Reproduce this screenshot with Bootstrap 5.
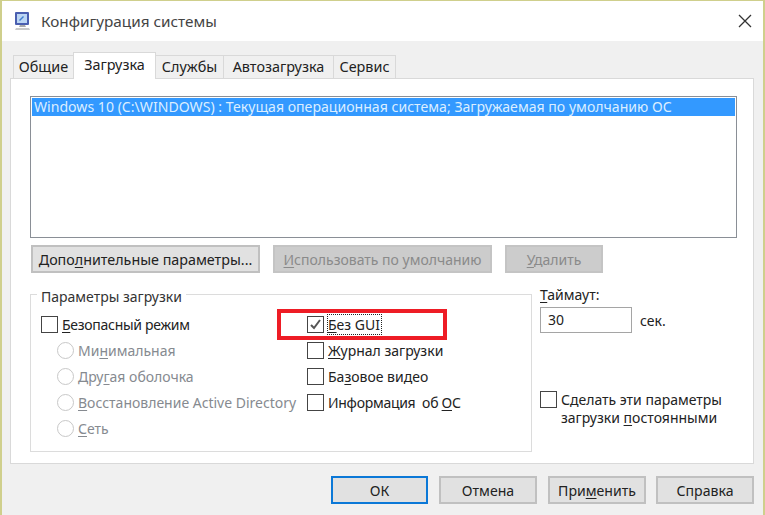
<!DOCTYPE html>
<html lang="ru">
<head>
<meta charset="utf-8">
<title>Конфигурация системы</title>
<link rel="stylesheet" href="https://cdn.jsdelivr.net/npm/bootstrap@5.3.0/dist/css/bootstrap.min.css">
<style>
html,body{width:765px;height:515px;margin:0;overflow:hidden;background:#f0f0f0}
body{font-family:"Noto Sans","Open Sans",sans-serif;font-size:14px;line-height:19px;color:#222}
.dlg{width:765px;height:515px;border-left:2px solid #cfcf8c;border-right:2px solid #cfcf8c;border-top:1px solid #cfcf8c;background:#f0f0f0;display:flex;flex-direction:column}
.ttl{height:40px;background:#fff;padding:0 11px 0 11px;gap:9px;font-size:15.3px;color:#444;flex:none}
.ttl svg{flex:none}
.x-btn{margin-left:auto}
.bodyw{padding:14px 9px 0 8px;flex:1}
.tabz{height:23px;padding-left:3px;align-items:flex-end}
.tabi{height:23px;border:1px solid #d9d9d9;border-bottom:0;background:#f0f0f0;margin-right:-1px;line-height:22px;color:#222;white-space:nowrap;text-align:center;font-size:14.4px;flex:none}
.tabi.act{height:27px;background:#fff;position:relative;z-index:2;margin-bottom:-1px;line-height:23px}
.t1{width:61px}.t2{width:83px}.t3{width:69px}.t4{width:111px}.t5{width:63px}
.pnl{height:386px;background:#fff;border:1px solid #d9d9d9;padding:17px 0 0 19px;display:flex;flex-direction:column}
.lst{height:142px;width:707px;border:1px solid #8a8f96;padding:1px;flex:none}
.lst-sel{height:18px;background:#3399ff;color:#dceeff;padding:0 2px;line-height:18px;font-size:14.1px;white-space:nowrap}
.btnz{gap:13px;margin-top:7px;height:28px;padding-left:1px}
.wbtn{height:28px;background:#e1e1e1;border:2px solid #c0c0c0;font-size:14.1px;line-height:23px;text-align:center;color:#222;padding:0;border-radius:0;white-space:nowrap}
.wbtn.off{background:#cccccc;border-color:#c4c4c4;color:#8a8a8a;font-size:14px}
.b1{width:229px;font-size:14.3px}.b2{width:219px}.b3{width:98px}
.low{margin-top:21px;height:160px;position:relative}
.grp{width:502px;height:158px;border:1px solid #dcdcdc;position:relative;padding:16px 0 0 10px;flex:none}
.grp-t{position:absolute;left:6px;top:-8px;background:#fff;padding:0 4px;line-height:19px;color:#333}
.c-a{width:266px;flex:none}
.rw{height:26px;display:flex;align-items:center;white-space:nowrap}
.tight{letter-spacing:-.28px}
.cb{width:17px;height:17px;border:1px solid #444;background:#fff;flex:none;margin-right:4px;display:flex;align-items:center;justify-content:center}
.rd{width:17px;height:17px;border:1px solid #c8c8c8;border-radius:50%;background:#fff;flex:none;margin-right:4px}
.ind{margin-left:16px;color:#868a90}
.u{text-decoration:underline;text-underline-offset:2px}
.foc{display:block;height:21px;border:1px dotted #222;margin-left:-1px;padding:0 1px 0 0;line-height:19px}
.red{position:absolute;left:246px;top:14px;width:170px;height:31px;border:4px solid #ee1c25;pointer-events:none;z-index:3}
.side{margin-left:8px;width:210px;margin-top:-9px}
.inp{width:92px;height:26px;border:1px solid #a5a5a5;padding:0 7px;line-height:24px;background:#fff}
.inrow{margin-top:3px}
.per{margin-top:58px}
.ctxt{line-height:18px}
.foot{justify-content:flex-end;gap:11px;padding:12px 0 0 0}
.foot .wbtn{width:98px;height:28px}
.foot .ok{border-color:#0b78d7;width:97px}
.foot .lastb{margin-left:-1px}
</style>
</head>
<body>
<div class="dlg">
 <div class="ttl d-flex align-items-center">
  <svg width="19" height="20" viewBox="0 0 19 20"><rect x="2" y="1" width="14" height="13" rx="1" fill="#4a5fb0"/><rect x="4" y="3" width="10" height="9" fill="#bcd6f4"/><path d="M6 9l4-4 1 1-4 4z" fill="#3f7fd0"/><path d="M7 14h5l1 2H6z" fill="#aaa"/><path d="M3 17h13l1 2H2z" fill="#c9c9c9"/></svg>
  <span>Конфигурация системы</span>
  <svg class="x-btn" width="14" height="14" viewBox="0 0 14 14"><path d="M1 1l12 12M13 1L1 13" stroke="#333" stroke-width="1.3" fill="none"/></svg>
 </div>
 <div class="bodyw">
  <div class="tabz d-flex">
   <div class="tabi t1">Общие</div>
   <div class="tabi act t2">Загрузка</div>
   <div class="tabi t3">Службы</div>
   <div class="tabi t4">Автозагрузка</div>
   <div class="tabi t5">Сервис</div>
  </div>
  <div class="pnl">
   <div class="lst"><div class="lst-sel">Windows 10 (C:\WINDOWS) : Текущая операционная система; Загружаемая по умолчанию ОС</div></div>
   <div class="btnz d-flex">
    <button class="wbtn b1" type="button">Допо<span class="u">л</span>нительные параметры...</button>
    <button class="wbtn off b2" type="button" disabled><span class="u">И</span>спользовать по умолчанию</button>
    <button class="wbtn off b3" type="button" disabled><span class="u">У</span>далить</button>
   </div>
   <div class="low d-flex">
    <div class="grp">
     <div class="grp-t">Параметры загрузки</div>
     <div class="d-flex">
      <div class="c-a">
       <div class="rw"><span class="cb"></span><span class="tight"><span class="u">Б</span>езопасный режим</span></div>
       <div class="rw ind"><span class="rd"></span><span>Ми<span class="u">н</span>имальная</span></div>
       <div class="rw ind"><span class="rd"></span><span>Дру<span class="u">г</span>ая оболочка</span></div>
       <div class="rw ind"><span class="rd"></span><span><span class="u">В</span>осстановление Active Directory</span></div>
       <div class="rw ind"><span class="rd"></span><span><span class="u">С</span>еть</span></div>
      </div>
      <div>
       <div class="rw"><span class="cb"><svg width="13" height="13" viewBox="0 0 13 13"><path d="M2 7l3 3 6-8" stroke="#555" stroke-width="2" fill="none"/></svg></span><span class="foc"><span class="u">Б</span>ез GUI</span></div>
       <div class="rw"><span class="cb"></span><span><span class="u">Ж</span>урнал загрузки</span></div>
       <div class="rw"><span class="cb"></span><span>Ба<span class="u">з</span>овое видео</span></div>
       <div class="rw"><span class="cb"></span><span class="tight">Информация&nbsp; об <span class="u">О</span>С</span></div>
      </div>
     </div>
     <div class="red"></div>
    </div>
    <div class="side">
     <div><span class="u">Т</span>аймаут:</div>
     <div class="inrow d-flex align-items-center gap-2">
      <div class="inp">30</div><span>сек.</span>
     </div>
     <div class="per d-flex">
      <span class="cb"></span>
      <span class="ctxt">Сделать эти параметры<br>загрузки <span class="u">п</span>остоянными</span>
     </div>
    </div>
   </div>
  </div>
  <div class="foot d-flex">
   <button class="wbtn ok" type="button">ОК</button>
   <button class="wbtn" type="button">Отмена</button>
   <button class="wbtn" type="button">При<span class="u">м</span>енить</button>
   <button class="wbtn lastb" type="button">Справка</button>
  </div>
 </div>
</div>
</body>
</html>
